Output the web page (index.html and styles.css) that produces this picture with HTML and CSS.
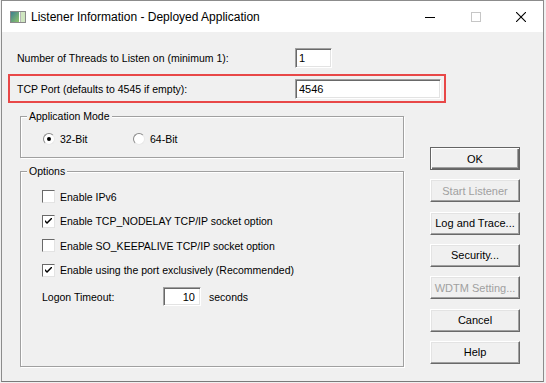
FILE: index.html
```html
<!DOCTYPE html>
<html lang="en">
<head>
    <meta charset="UTF-8">
    <meta name="viewport" content="width=device-width, initial-scale=1.0">
    <title>Listener Information - Deployed Application</title>
    <link rel="stylesheet" href="styles.css">
</head>
<body>
    <div class="window">
        <div class="titlebar">
            <svg class="app-icon" width="16" height="12" viewBox="0 0 16 12">
                <defs>
                    <linearGradient id="pane" x1="0" y1="0" x2="1" y2="1">
                        <stop offset="0" stop-color="#3d7f8f"/>
                        <stop offset="1" stop-color="#8fc46a"/>
                    </linearGradient>
                </defs>
                <rect x="0.5" y="0.5" width="15" height="11" fill="#fff" stroke="#8a8a8a"/>
                <rect x="1" y="1" width="8" height="10" fill="url(#pane)"/>
                <rect x="11" y="1" width="4" height="10" fill="#cfe6c0"/>
                <line x1="10.5" y1="1" x2="10.5" y2="11" stroke="#b8b8b8"/>
            </svg>
            <span class="title">Listener Information - Deployed Application</span>
            <div class="caption-buttons">
                <span class="cap">
                    <svg width="10" height="10" viewBox="0 0 10 10"><line x1="0" y1="5.5" x2="10" y2="5.5" stroke="#000"/></svg>
                </span>
                <span class="cap">
                    <svg width="10" height="10" viewBox="0 0 10 10"><rect x="0.5" y="0.5" width="9" height="9" fill="none" stroke="#c6c6c6"/></svg>
                </span>
                <span class="cap cap-close">
                    <svg width="10" height="10" viewBox="0 0 10 10"><path d="M0 0 L10 10 M10 0 L0 10" stroke="#000" stroke-width="1.1"/></svg>
                </span>
            </div>
        </div>

        <div class="content">
            <div class="main">
                <div class="field-row threads">
                    <label class="field-label">Number of Threads to Listen on (minimum 1):</label>
                    <input class="field field-small" type="text" value="1">
                </div>
                <div class="field-row port">
                    <label class="field-label">TCP Port (defaults to 4545 if empty):</label>
                    <input class="field field-wide" type="text" value="4546">
                </div>

                <div class="group mode">
                    <span class="group-title">Application Mode</span>
                    <label class="radio-item"><span class="radio checked"></span>32-Bit</label>
                    <label class="radio-item"><span class="radio"></span>64-Bit</label>
                </div>

                <div class="group options">
                    <span class="group-title">Options</span>
                    <label class="check-row"><span class="checkbox"></span>Enable IPv6</label>
                    <label class="check-row"><span class="checkbox checked"><svg width="7" height="7" viewBox="0 0 7 7"><path d="M0 2 L0 4 L2 6 L7 1 L7 -1 L2 4 Z" fill="#000"/></svg></span>Enable TCP_NODELAY TCP/IP socket option</label>
                    <label class="check-row"><span class="checkbox"></span>Enable SO_KEEPALIVE TCP/IP socket option</label>
                    <label class="check-row"><span class="checkbox checked"><svg width="7" height="7" viewBox="0 0 7 7"><path d="M0 2 L0 4 L2 6 L7 1 L7 -1 L2 4 Z" fill="#000"/></svg></span>Enable using the port exclusively (Recommended)</label>
                    <div class="timeout-row">
                        <span class="timeout-label">Logon Timeout:</span>
                        <input class="field field-timeout" type="text" value="10">
                        <span class="timeout-unit">seconds</span>
                    </div>
                </div>
            </div>

            <div class="buttons">
                <button class="btn default">OK</button>
                <button class="btn" disabled>Start Listener</button>
                <button class="btn">Log and Trace...</button>
                <button class="btn">Security...</button>
                <button class="btn" disabled>WDTM Setting...</button>
                <button class="btn">Cancel</button>
                <button class="btn">Help</button>
            </div>
        </div>
    </div>
</body>
</html>
```

FILE: styles.css
```css
:root {
    --face: #f0f0f0;
    --shadow: #a0a0a0;
    --dark-shadow: #696969;
    --light: #e3e3e3;
    --highlight: #e84848;
}
html {
    background: var(--face);
}
body {
    margin: 0;
    padding: 0;
    font-family: 'Liberation Sans', Arial, sans-serif;
    font-size: 10.5px;
    color: #000;
}
.window {
    box-sizing: border-box;
    width: 543px;
    height: 382px;
    margin-left: 1px;
    border: 1px solid #8c8c8c;
    border-bottom-color: #7a7a7a;
    background: var(--face);
    display: flex;
    flex-direction: column;
}
.titlebar {
    height: 31px;
    background: #fff;
    display: flex;
    align-items: center;
}
.app-icon {
    margin-left: 8px;
    margin-right: 5px;
}
.title {
    font-size: 12px;
}
.caption-buttons {
    margin-left: auto;
    display: flex;
    height: 100%;
}
.cap {
    width: 46px;
    display: flex;
    align-items: center;
    justify-content: center;
}
.cap-close {
    width: 44px;
}
.content {
    flex: 1;
    display: flex;
}
.main {
    width: 428px;
}
.field-row {
    display: flex;
    align-items: center;
}
.field-label {
    width: 278px;
    flex-shrink: 0;
}
.threads {
    margin-top: 16px;
    margin-left: 15px;
}
.port {
    box-sizing: border-box;
    margin-top: 6px;
    margin-left: 6px;
    width: 438px;
    height: 29px;
    padding: 3px 0 2px 7px;
    border: 2px solid var(--highlight);
}
.field {
    box-sizing: border-box;
    height: 20px;
    margin: 0;
    padding: 0 3px;
    border: 1px solid;
    border-color: var(--shadow) #fff #fff var(--shadow);
    box-shadow: inset 1px 1px var(--dark-shadow), inset -1px -1px var(--light);
    background: #fff;
    font-family: inherit;
    font-size: 11px;
    color: #000;
    outline: none;
}
.field-small {
    width: 37px;
}
.field-wide {
    width: 146px;
}
.field-timeout {
    width: 38px;
    height: 19px;
    text-align: right;
    padding-right: 5px;
}
.group {
    box-sizing: border-box;
    position: relative;
    margin-left: 18px;
    width: 384px;
    border: 1px solid var(--shadow);
    box-shadow: inset 1px 1px #fff, 1px 1px #fff;
}
.group-title {
    position: absolute;
    top: -7px;
    left: 6px;
    padding: 0 2px;
    background: var(--face);
    line-height: 13px;
}
.mode {
    margin-top: 13px;
    height: 42px;
    display: flex;
    padding: 16px 0 0 22px;
}
.radio-item {
    display: flex;
    align-items: center;
    gap: 5px;
    width: 90px;
    height: 12px;
}
.radio {
    box-sizing: border-box;
    position: relative;
    width: 12px;
    height: 12px;
    border-radius: 50%;
    background: #fff;
    border: 1px solid;
    border-color: #8a8a8a #e8e8e8 #e8e8e8 #8a8a8a;
}
.radio.checked::after {
    content: '';
    position: absolute;
    left: 3px;
    top: 3px;
    width: 4px;
    height: 4px;
    border-radius: 50%;
    background: #000;
}
.options {
    margin-top: 13px;
    height: 196px;
    padding: 18px 0 0 21px;
}
.check-row {
    display: flex;
    align-items: center;
    gap: 5px;
    height: 13px;
    margin-bottom: 11.5px;
}
.checkbox {
    box-sizing: border-box;
    width: 13px;
    height: 13px;
    background: #fff;
    border: 1px solid;
    border-color: var(--dark-shadow) var(--light) var(--light) var(--dark-shadow);
    display: flex;
    align-items: center;
    justify-content: center;
}
.timeout-row {
    display: flex;
    align-items: center;
    margin-top: -1px;
}
.timeout-label {
    width: 121px;
}
.timeout-unit {
    margin-left: 8px;
}
.buttons {
    display: grid;
    grid-auto-rows: 23px;
    row-gap: 9.33px;
    padding-top: 115px;
}
.btn {
    box-sizing: border-box;
    width: 90px;
    height: 23px;
    padding: 0;
    background: var(--face);
    border: 1px solid;
    border-color: #fff var(--dark-shadow) var(--dark-shadow) #fff;
    box-shadow: inset -1px -1px var(--shadow), inset 1px 1px var(--light);
    font-family: inherit;
    font-size: 11px;
    color: #000;
    cursor: pointer;
}
.btn.default {
    border-color: #646464;
    box-shadow: inset 1px 1px #fff, inset -1px -1px var(--dark-shadow), inset -2px -2px var(--shadow);
}
.btn:disabled {
    color: #a0a0a0;
    cursor: default;
}
```
